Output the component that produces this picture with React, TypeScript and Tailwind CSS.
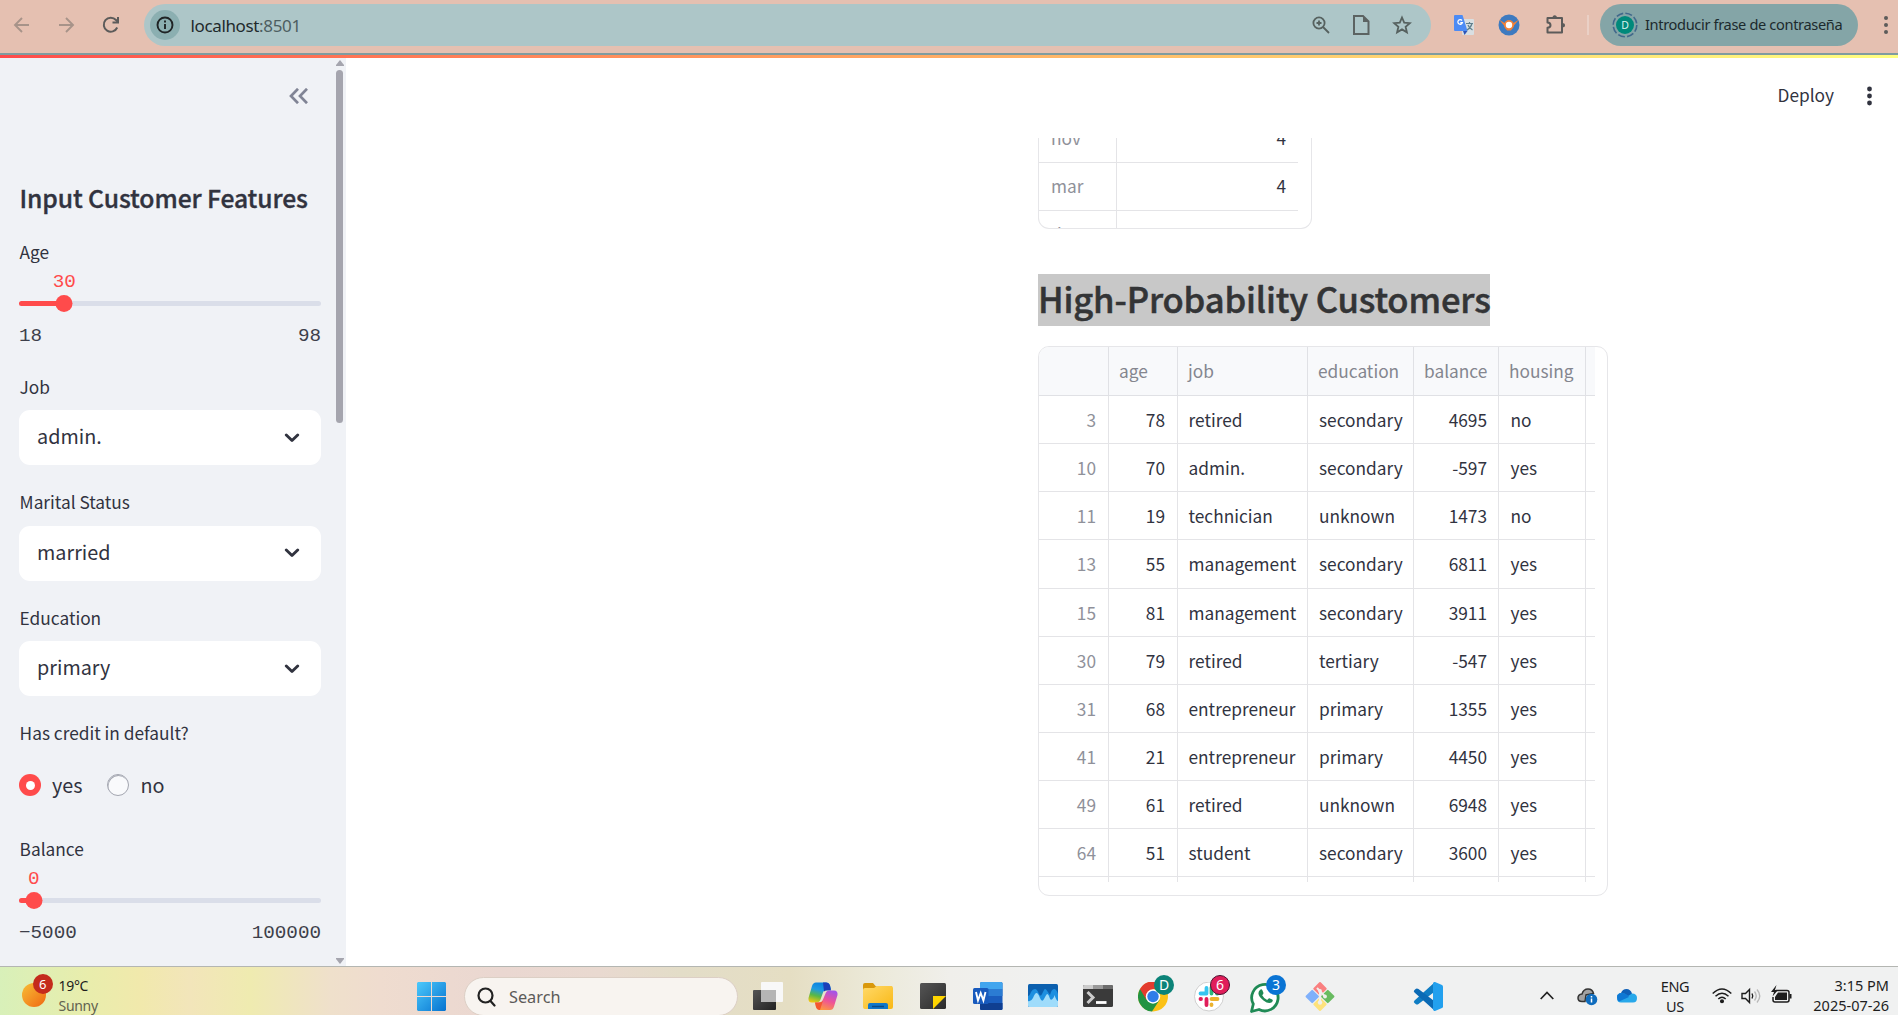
import React from "react";

const sans = "font-['Noto_Sans_CJK_SC',sans-serif]";
const ui = "font-['Noto_Sans',sans-serif]";
const mono = "font-['Liberation_Mono',monospace]";

/* ---------- Browser toolbar ---------- */

function Toolbar() {
  return (
    <div className={`flex h-[53px] items-start bg-[#e5c0b1] ${ui}`}>
      <div className="flex h-[49px] w-[144px] shrink-0 items-center pl-[13px]">
        <svg width="18" height="18" viewBox="0 0 18 18" fill="none" stroke="#a79389" strokeWidth="1.9"><path d="M16 9H2.5M9 2 2 9l7 7" /></svg>
        <svg className="ml-[27px]" width="18" height="18" viewBox="0 0 18 18" fill="none" stroke="#a79389" strokeWidth="1.9"><path d="M1 9h13.5M8 2l7 7-7 7" /></svg>
        <svg className="ml-[26px]" width="18" height="18" viewBox="0 0 18 18" fill="none" stroke="#5c5b5a" strokeWidth="2"><path d="M15.2 11.500A7 7 0 1 1 14 4l1.500 1.600" /><path d="M16 1v5.500h-5.500" /></svg>
      </div>
      <div className="mt-1 flex h-[42px] w-[1287px] shrink-0 items-center rounded-full bg-[#adc6c8] pl-1.5">
        <div className="flex size-[30px] items-center justify-center rounded-full bg-[#8bafb1]">
          <svg width="18" height="18" viewBox="0 0 18 18" fill="none" stroke="#1f2425" strokeWidth="1.9"><circle cx="9" cy="9" r="7.500" /><path d="M9 8v5M9 4.500v2" /></svg>
        </div>
        <span className="mt-px ml-[10.5px] w-[112px] whitespace-nowrap text-[17px] leading-[30px] tracking-[-0.36px] text-[#1f2a2c]">localhost<span className="text-[#4d5e61]">:8501</span></span>
        <div className="ml-auto flex items-center gap-[22px] pr-[19px]">
          <svg width="18" height="18" viewBox="0 0 18 18" fill="none" stroke="#56615f" strokeWidth="1.8"><circle cx="7" cy="7" r="5.600" /><path d="m11 11 6 6M7 4.500v5M4.500 7h5" /></svg>
          <svg width="18" height="22" viewBox="0 0 18 22" fill="none" stroke="#5c6362" strokeWidth="2"><path d="M2 2h9l5.500 5.500V20H2z" /><path d="M11 2v6h6z" fill="#5c6362" stroke="none" /></svg>
          <svg width="20" height="20" viewBox="0 0 20 20" fill="none" stroke="#56615f" strokeWidth="1.8"><path d="m10 2.500 2.200 5.100 5.600.5-4.200 3.700 1.300 5.500L10 14.400l-4.900 2.900 1.300-5.500L2.200 8.100l5.600-.5z" /></svg>
        </div>
      </div>
      <div className="flex h-[50px] items-center">
        <svg className="ml-[22px]" width="22" height="22" viewBox="0 0 22 22">
          <rect x="9" y="5" width="12" height="16" rx="1" fill="#d9dfe2" />
          <path d="M1 2q0-1 1-1h7.500L14.500 17H2q-1 0-1-1z" fill="#4c8bf5" />
          <path d="M14.500 17H10l1.500 4z" fill="#2f55b8" />
          <path d="M13 9.500h7M16.500 8v1.500M19 9.500q-1 4-5 6.500M15 11q1 3 4.500 5" stroke="#5f7f8c" strokeWidth="1.200" fill="none" />
          <path d="M9 6.500A2.300 2.300 0 1 0 9.400 8.600H7.300" stroke="#fff" strokeWidth="1.300" fill="none" />
        </svg>
        <svg className="ml-[23px]" width="22" height="22" viewBox="0 0 22 22">
          <circle cx="11" cy="11" r="10.500" fill="#3d7ac0" />
          <path d="M1 5.500 6.500 9h9L21 5.500 16 11.500 13 16.500H9L6 11.500z" fill="#f28238" />
          <circle cx="11" cy="11" r="5" fill="#f28238" /><circle cx="11" cy="11" r="3.200" fill="#fff" />
        </svg>
        <svg className="ml-[24px]" width="23" height="22" viewBox="0 0 23 22" fill="none" stroke="#5c5b5a" strokeWidth="2" strokeLinejoin="round"><path d="M3.500 4h14.500v14.500H3.500v-4.700q3-.3 3-2.600t-3-2.600z" /><path d="M8.500 4q0-2.800 2.200-2.800T13 4zM18 9q3 0 3 2.200T18 13.500z" fill="#5c5b5a" stroke="none" /></svg>
        <div className="ml-[20px] h-5 w-[2px] bg-[#ead0c6]" />
        <div className="ml-[11px] flex h-[42px] w-[258px] shrink-0 items-center rounded-full bg-[#84a5a7] pl-3">
          <svg className="shrink-0" width="26" height="26" viewBox="0 0 26 26"><circle cx="13" cy="13" r="11.800" fill="none" stroke="#41688b" strokeWidth="1.600" strokeDasharray="7 2.270" /><circle cx="13" cy="13" r="9" fill="#00897b" /><text x="13" y="16.700" textAnchor="middle" fontSize="10.500" fill="#d9f2ee" fontFamily="Noto Sans">D</text></svg>
          <span className="ml-[7px] whitespace-nowrap text-[14.600px] tracking-[-0.35px] text-[#1c2a2d]">Introducir frase de contraseña</span>
        </div>
        <svg className="ml-[25px] shrink-0" width="6" height="20" viewBox="0 0 6 20" fill="#5c5b5a"><circle cx="3" cy="3" r="2" /><circle cx="3" cy="10" r="2" /><circle cx="3" cy="17" r="2" /></svg>
      </div>
    </div>
  );
}

/* ---------- Sidebar ---------- */

const labelCls = "pl-[0.6px] text-[17.3px] leading-[24.6px] h-6 text-[#31333f]";

function Slider(p: { label: string; value: string; pct: number; min: string; max: string }) {
  return (
    <>
      <div className={labelCls}>{p.label}</div>
      <div className={`relative mt-[6px] h-6 text-[19.25px] leading-6 text-[#ff4b4b] ${mono}`}>
        <span className="absolute -translate-x-1/2" style={{ left: `${p.pct}%` }}>{p.value}</span>
      </div>
      <div className="relative mt-[7px] h-[5px] rounded-full bg-[#dadee9]">
        <div className="h-full rounded-full bg-[#ff4b4b]" style={{ width: `${p.pct}%` }} />
        <div className="absolute -top-[6px] size-[17px] -translate-x-1/2 rounded-full bg-[#ff4b4b]" style={{ left: `${p.pct}%` }} />
      </div>
      <div className={`mt-[18px] flex justify-between text-[19.25px] leading-6 text-[#3d3f4a] ${mono}`}>
        <span>{p.min}</span><span>{p.max}</span>
      </div>
    </>
  );
}

function Select({ label, value }: { label: string; value: string }) {
  return (
    <div className="h-[115.5px]">
      <div className={labelCls}>{label}</div>
      <div className="mt-[11.5px] flex h-[55px] items-center justify-between rounded-[11px] bg-white pr-[21px] pl-[18px]">
        <span className="-mt-[3px] text-[19.8px] leading-[30px]">{value}</span>
        <svg width="16" height="10" viewBox="0 0 16 10" fill="none" stroke="#31333f" strokeWidth="2.900" strokeLinecap="round" strokeLinejoin="round"><path d="m2.300 2 5.700 5.500L13.700 2" /></svg>
      </div>
    </div>
  );
}

function Sidebar() {
  return (
    <aside className={`flex w-[346px] shrink-0 overflow-hidden bg-[#f0f2f6] text-[#31333f] ${sans}`}>
      <div className="w-[321px] pl-[19px]">
        <div className="flex h-[121px] justify-end pt-[30px] pr-[12px]">
          <svg width="20" height="16" viewBox="0 0 20 16" fill="none" stroke="#808495" strokeWidth="2.700"><path d="M9 .8 2 8l7 7.200M18 .8 11 8l7 7.200" /></svg>
        </div>
        <h2 className="h-[61px] pl-[0.5px] whitespace-nowrap text-[24.700px] leading-[36px] font-medium tracking-[-0.1px] [-webkit-text-stroke:0.35px_#31333f]">Input Customer Features</h2>
        <div className="h-[134.5px]"><Slider label="Age" value="30" pct={15} min="18" max="98" /></div>
        <Select label="Job" value="admin." />
        <Select label="Marital Status" value="married" />
        <Select label="Education" value="primary" />
        <div className="h-[115.5px]">
          <div className={labelCls}>Has credit in default?</div>
          <div className="mt-[25px] flex h-[30px] items-center text-[19.8px] leading-[30px]">
            <span className="flex size-[22px] items-center justify-center rounded-full bg-[#ff4b4b]"><span className="size-[9px] rounded-full bg-white" /></span>
            <span className="ml-[11px]">yes</span>
            <span className="ml-[25px] size-[22px] rounded-full border border-[#a3a6b0] bg-[#f9fafc] shadow-[inset_0.5px_1px_0_#a3a6b0]" />
            <span className="ml-[11px]">no</span>
          </div>
        </div>
        <Slider label="Balance" value="0" pct={4.9} min="−5000" max="100000" />
      </div>
      <div className="flex w-[25px] flex-col items-center pt-[2px] pl-[12px]">
        <svg className="shrink-0" width="8" height="6" viewBox="0 0 8 6"><path d="M4 0 8 5v1H0V5z" fill="#a5a5ae" /></svg>
        <div className="mt-[4px] h-[353px] w-[7px] shrink-0 rounded-full bg-[#a5a5ae]" />
        <svg className="mt-auto mb-[2px] shrink-0" width="8" height="6" viewBox="0 0 8 6"><path d="M4 6 8 1V0H0v1z" fill="#a5a5ae" /></svg>
      </div>
    </aside>
  );
}

/* ---------- Main content ---------- */

const rows: string[][] = [
  ["3", "78", "retired", "secondary", "4695", "no"],
  ["10", "70", "admin.", "secondary", "-597", "yes"],
  ["11", "19", "technician", "unknown", "1473", "no"],
  ["13", "55", "management", "secondary", "6811", "yes"],
  ["15", "81", "management", "secondary", "3911", "yes"],
  ["30", "79", "retired", "tertiary", "-547", "yes"],
  ["31", "68", "entrepreneur", "primary", "1355", "yes"],
  ["41", "21", "entrepreneur", "primary", "4450", "yes"],
  ["49", "61", "retired", "unknown", "6948", "yes"],
  ["64", "51", "student", "secondary", "3600", "yes"],
];
const heads = ["", "age", "job", "education", "balance", "housing"];
const grid = "grid w-[556px] grid-cols-[70px_69px_130px_106px_85px_87px_9px]";
const align = ["text-right pr-[12px] text-[#8f919a]", "text-right pr-[12px]", "pl-[10.5px]", "pl-[11px]", "text-right pr-[11px]", "pl-[11.5px]"];

function MonthRow({ name, count }: { name: string; count?: number }) {
  return (
    <div className="grid h-[48px] w-[259px] grid-cols-[78px_181px] border-b border-[#e4e4e7] leading-[45px]">
      <span className="border-r border-[#e4e4e7] pl-[12px] text-[#8f919a]">{name}</span>
      <span className="pr-[12px] text-right">{count}</span>
    </div>
  );
}

function Main() {
  return (
    <main className={`flex-1 overflow-hidden bg-white text-[#31333f] ${sans}`}>
      <div className="flex h-[80px] items-start justify-end pt-[24px] pr-[25px]">
        <span className="text-[17.3px] leading-[26px]">Deploy</span>
        <svg className="mt-[4px] ml-[32px]" width="7" height="20" viewBox="0 0 7 20" fill="#31333f"><circle cx="3.500" cy="3" r="2.400" /><circle cx="3.500" cy="10" r="2.400" /><circle cx="3.500" cy="17" r="2.400" /></svg>
      </div>
      <div className="ml-[692px] text-[17.3px]">
        <div className="flex h-[91px] w-[274px] flex-col justify-start overflow-hidden rounded-b-[11px] border border-t-0 border-[#e6e6e9]">
          <div className="-mt-[23px]"><MonthRow name="nov" count={4} /><MonthRow name="mar" count={4} /><MonthRow name="dec" /></div>
        </div>
        <h3 className="mt-[45px] h-[52px] w-[452px] bg-[#c8c8c8] text-[34.600px] leading-[48px] font-medium tracking-[-0.15px] whitespace-nowrap text-[#333436] [-webkit-text-stroke:0.5px_#333436]">High-Probability Customers</h3>
        <div className="mt-[20px] h-[550px] w-[570px] overflow-hidden rounded-[11px] border border-[#e6e6e9]">
          <div className={`${grid} h-[49px] border-b border-[#e0e1e5] bg-[#f8f9fb] leading-[48px] text-[#84868f]`}>
            {heads.map((h) => <span key={h} className="border-r border-[#e0e1e5] pl-[10px]">{h}</span>)}
          </div>
          <div className="h-[486px] overflow-hidden">
            {rows.map((r) => (
              <div key={r[0]} className={`${grid} h-[48.15px] border-b border-[#e4e4e7] leading-[48px]`}>
                {r.map((c, i) => <span key={i} className={`border-r border-[#e4e4e7] ${align[i]}`}>{c}</span>)}
              </div>
            ))}
            <div className={`${grid} h-[48px]`}>
              {heads.map((h) => <span key={h} className="border-r border-[#e4e4e7]" />)}
            </div>
          </div>
        </div>
      </div>
    </main>
  );
}

/* ---------- Taskbar ---------- */

function Badge({ text, color }: { text: string; color: string }) {
  return <span className={`absolute -top-[7px] -right-[6px] flex size-[20px] items-center justify-center rounded-full text-[14px] leading-none text-white ${color}`}>{text}</span>;
}

function Apps() {
  return (
    <div className="flex items-start gap-[25px] pt-[15px]">
      <svg width="30" height="30" viewBox="0 0 30 30"><defs><linearGradient id="tv" x2="1" y2="1"><stop stopColor="#555" /><stop offset="1" stopColor="#222" /></linearGradient></defs><rect y="8" width="23" height="20" rx="1" fill="url(#tv)" /><rect x="8" y="0" width="22" height="20" rx="1" fill="#f8f8f8" /><path d="M8 8h15v12H9q-1 0-1-1z" fill="#b5b5b5" /></svg>
      <svg width="30" height="30" viewBox="0 0 30 30">
        <defs><linearGradient id="ca" x1=".5" x2=".2" y2="1"><stop stopColor="#0a82e0" /><stop offset=".35" stopColor="#1f9ae0" /><stop offset=".65" stopColor="#58b847" /><stop offset="1" stopColor="#f7c80f" /></linearGradient><linearGradient id="cb" x1=".7" x2=".3" y2="1"><stop stopColor="#a453e8" /><stop offset=".5" stopColor="#ee5397" /><stop offset="1" stopColor="#ff9a3d" /></linearGradient></defs>
        <path d="M8 .5h10q3 0 4 3l1 4h-4q-3 0-4 3l-2.500 7q-1 3-4 3H4Q0 20.500.5 16L4 4Q5 .5 8 .5z" fill="url(#ca)" />
        <path d="M15 .5h3q3 0 4 3l1 5h-4q-2 0-3 1z" fill="#1b3fb8" />
        <path d="M22 28H12q-3 0-4-3l-1-4.500h4q3 0 4-3l2.500-6q1-3 4-3H26q4 0 3.500 4.500L26 24.500q-1 3.500-4 3.500z" fill="url(#cb)" />
        <path d="M7 20.500h4q3 0 4-2l-3 9.500q-3 0-4-3z" fill="#f4572e" />
      </svg>
      <svg width="30" height="29" viewBox="0 0 30 29"><defs><linearGradient id="fo" x2="1" y2="1"><stop stopColor="#ffd968" /><stop offset="1" stopColor="#f9b815" /></linearGradient></defs><path d="M0 3q0-2 2-2h8l3 3.500H29V10H0z" fill="#d9980b" /><path d="M0 8q0-2 2-2h9l3-2h14q2 0 2 2v19q0 2-2 2H2q-2 0-2-2z" fill="url(#fo)" /><path d="M5 27v-4q0-2 2-2h16q2 0 2 2v4z" fill="#1177c9" /><path d="M9 24.500h12" stroke="#0a4a86" strokeWidth="1.500" /></svg>
      <svg width="30" height="29" viewBox="0 0 30 29"><defs><linearGradient id="sn" x2="1" y2="1"><stop stopColor="#555" /><stop offset="1" stopColor="#2b2b2b" /></linearGradient></defs><rect x="2" y="1" width="26" height="26" rx="1.500" fill="url(#sn)" /><path d="M15 14h13L15 27z" fill="#ffd500" /></svg>
      <svg width="30" height="29" viewBox="0 0 30 29"><rect x="7" width="22.500" height="28" rx="1.500" fill="#1a5dbe" /><path d="M7 7V1.500Q7 0 8.500 0H28q1.500 0 1.500 1.500V7z" fill="#41a5ee" /><path d="M7 7h22.500v7H7z" fill="#2b7cd3" /><path d="M7 21h22.500v5.500q0 1.500-1.500 1.500H8.500Q7 28 7 26.500z" fill="#103f91" /><rect y="6" width="15.500" height="16" rx="1.500" fill="#185abd" /><path d="m3 10 2 8.500L7.700 11l2.700 7.500L12.500 10" fill="none" stroke="#fff" strokeWidth="1.900" /></svg>
      <svg width="30" height="29" viewBox="0 0 30 29"><rect y="2" width="30" height="23" rx="1.500" fill="#0b5fae" /><path d="M0 14q1.500 0 3-4 1.500-3 4-3 2 0 4 5 1.500 3 3 0l2-4q1-2 2.500 0l3.500 5q1.500-6 4-6t4 5v11H0z" fill="#1d8fe0" /><path d="M0 19q3 1 5-3 2-5 3.500-5T12 16q2 5 4 1t3-5q1.500 0 2.500 3.500t3 1.500 2-4q2 6 3.500 6v4.500q0 1.500-1.500 1.500h-27Q0 25 0 23.500z" fill="#9fdcfb" /></svg>
      <svg width="30" height="29" viewBox="0 0 30 29"><rect y="3" width="30" height="22" rx="1.500" fill="#3a3a3a" /><path d="M0 7V4.500Q0 3 1.500 3H10v4z" fill="#ccc" /><path d="M10 3h10v4H10z" fill="#9a9a9a" /><path d="M20 3h8.500Q30 3 30 4.500V7H20z" fill="#6d6d6d" /><path d="m4.500 10 5.500 5.500L4.500 21" fill="none" stroke="#ccc" strokeWidth="3" /><path d="M13 20.500h10.500" stroke="#fff" strokeWidth="2.800" /></svg>
      <span className="relative size-[30px]">
        <svg width="30" height="30" viewBox="0 0 30 30"><circle cx="15" cy="14.500" r="15" fill="#fbc116" /><path d="M2 7a15 15 0 0 0 12 22.500L21.500 18 15 14.500z" fill="#229342" /><path d="M2 7A15 15 0 0 1 28 7H15L8.500 18z" fill="#e33b2e" /><circle cx="15" cy="14.500" r="7.200" fill="#fff" /><circle cx="15" cy="14.500" r="5.700" fill="#2f7de9" /></svg>
        <Badge text="D" color="bg-[#0b8378]" />
      </span>
      <span className="relative ml-px size-[30px]">
        <svg width="30" height="30" viewBox="0 0 30 30" strokeLinecap="round" strokeWidth="3.800" fill="none"><circle cx="15" cy="14.500" r="14.500" fill="#fff" stroke="#cfcfcf" strokeWidth="1" /><path d="M12.500 6v5.500M6.500 11.500h6" stroke="#36c5f0" /><path d="M17.500 5.500v6M23 11.500h.5" stroke="#2eb67d" /><path d="M17.500 17h6M17.500 22.500V23" stroke="#ecb22e" /><path d="M12.500 17v6M6.500 17H7" stroke="#e01e5a" /></svg>
        <Badge text="6" color="bg-[#e01e5a] border-[1.5px] border-[#4b1230]" />
      </span>
      <span className="relative ml-px size-[30px]">
        <svg width="30" height="31" viewBox="0 0 30 31"><path d="M1.500 29.500 3.300 22A13.200 13.200 0 1 1 9 27.500z" fill="#fff" stroke="#1f8a55" strokeWidth="2.800" strokeLinejoin="round" /><path d="M10 8q1.500-1.500 2.500.5l1 2.500q0 1-1.300 2.200 1.800 3.500 5 4.800 1.300-2 2.300-1.800l2.700 1.300q1.300 1-.2 2.500-3 2.700-8.500-1.500t-5-7.500Q8.600 9 10 8z" fill="#1f8a55" /></svg>
        <Badge text="3" color="bg-[#0a74d4]" />
      </span>
      <svg width="30" height="30" viewBox="0 0 30 30"><g transform="translate(15 14.500) rotate(45)"><rect x="-10.500" y="-10.500" width="10" height="10" rx="1" fill="#f98080" /><rect x=".5" y="-10.500" width="10" height="10" rx="1" fill="#68bb60" /><rect x="-10.500" y=".5" width="10" height="10" rx="1" fill="#7fb0fb" /><rect x=".5" y=".5" width="10" height="10" rx="1" fill="#fde27c" /></g><path d="M12 6l8 8.500M15 8v14" stroke="#efefee" strokeWidth="2" /><circle cx="15" cy="9" r="1.900" fill="#efefee" /><circle cx="20" cy="14.500" r="1.900" fill="#efefee" /><circle cx="15" cy="20.500" r="2.200" fill="#efefee" /></svg>
      <svg className="ml-[53px]" width="30" height="30" viewBox="0 0 30 30"><path d="M22 0 1.500 18.500q-1.500 1.500 0 2.500l1.500 1.200q1 .8 2.500-.2L22.500 9z" fill="#0f7dc4" /><path d="M22 29 1.500 10.500Q0 9 1.500 8L3 6.800q1-.8 2.500.2L22.500 20z" fill="#0a6ab5" /><path d="m22 0 7 3q1 .6 1 1.500v20q0 1-1 1.500l-7 3q-1.500 0-2-1.500V1Q20.500 0 22 0z" fill="#22a0ee" /></svg>
    </div>
  );
}

function Taskbar() {
  return (
    <footer className={`flex h-[49px] overflow-hidden border-t border-[#b4b6b2] bg-[linear-gradient(90deg,#d8f0b9_0px,#e9edac_90px,#f1e9ac_140px,#f2e5ba_190px,#efebb0_250px,#efe0cb_330px,#efdccf_380px,#ead7d1_500px,#e9d9d0_600px,#e3ddc8_680px,#e5dec3_790px,#eceada_880px,#f0efeb_950px,#f0f1f1_1060px)] text-[#1d1d1d] ${ui}`}>
      <div className="relative w-[417px] shrink-0 pt-[9px] pl-[58.5px] text-[14px] leading-[20px] tracking-[-0.3px]">
        <div className="absolute top-[16px] left-[22px] size-[24px] rounded-full bg-linear-to-br from-[#f6bd35] to-[#ee6510]" />
        <span className="absolute top-[6.5px] left-[32.5px] flex size-5 items-center justify-center rounded-full bg-[#c42b1c] text-[13px] text-white">6</span>
        <div>19°C</div>
        <div className="text-[#62624f]">Sunny</div>
      </div>
      <svg className="mt-[15px] shrink-0" width="29" height="29" viewBox="0 0 29 29"><defs><linearGradient id="wi" x2="1" y2="1"><stop stopColor="#4cc9fb" /><stop offset="1" stopColor="#0672d0" /></linearGradient></defs><path d="M1 0h13v14H0V1zM15 0h13l1 1v13H15zM0 15h14v14H1l-1-1zM15 15h14v13l-1 1H15z" fill="url(#wi)" /></svg>
      <div className="mt-[10px] ml-[18px] flex h-[39px] w-[274px] shrink-0 items-center rounded-full border border-[#dccfc5] bg-[#f8f4f0] pl-[12px]">
        <svg width="19" height="20" viewBox="0 0 19 20" fill="none" stroke="#222" strokeWidth="2.200" strokeLinecap="round"><circle cx="8.500" cy="8.500" r="7" /><path d="m13.500 14 4 4.500" /></svg>
        <span className="mt-px ml-[13px] text-[16.300px] text-[#5c5a58]">Search</span>
      </div>
      <div className="ml-[15px]"><Apps /></div>
      <div className="ml-auto flex shrink-0 items-start pr-[9px] text-[14.500px] leading-[20px]">
        <svg className="mt-[24px]" width="14" height="9" viewBox="0 0 14 9" fill="none" stroke="#222" strokeWidth="1.700"><path d="m.7 8 6.300-6.500L13.300 8" /></svg>
        <svg className="mt-[21px] ml-[23px]" width="21" height="18" viewBox="0 0 21 18"><path d="M8 13.500H5q-4 0-4-3.500t4-4q1.500-5 6-5t5.500 4.500L9 7z" fill="#a2a2a2" stroke="#333" strokeWidth="1.500" /><circle cx="14.500" cy="11.500" r="5.800" fill="#0f6cbd" /><path d="M14.500 10.500v4M14.500 8v1.500" stroke="#fff" strokeWidth="1.500" /></svg>
        <svg className="mt-[22px] ml-[19px]" width="20" height="14" viewBox="0 0 20 14"><path d="M4 10Q0 10 0 7.500 0 4.500 4 4 5.500 0 9.500 0T15 4.500l-3 5z" fill="#0f60b8" /><path d="M4 13.500Q0 13.500 0 9t4-5q4 0 7 3l4-2.500q5 0 5 4.500t-4 4.500z" fill="#28a8ea" /><path d="M0 8q1-4 5-4t7 4L2 12.500Q0 11 0 8z" fill="#0f78d4" /></svg>
        <div className="mt-[9px] ml-[23px] w-[30px] text-center tracking-[-0.3px]">ENG<br />US</div>
        <svg className="mt-[21px] ml-[22px]" width="20" height="16" viewBox="0 0 20 16" fill="none" stroke="#1d1d1d" strokeWidth="1.500"><path d="M.7 5.500q9.300-9 18.600 0M3.500 8.300q6.500-6 13 0M6.300 11q3.700-3.500 7.400 0" /><circle cx="10" cy="13.300" r="1.300" fill="#1d1d1d" /></svg>
        <svg className="mt-[20px] ml-[9px]" width="21" height="18" viewBox="0 0 21 18" fill="none" stroke="#1d1d1d" strokeWidth="1.400"><path d="M1 6.500h3.500l4-4v13l-4-4H1z" /><path d="M11 6.500q1.500 2.500 0 5" /><path d="M13.500 4.500q3.500 4.500 0 9M16 2.500q5.500 6.500 0 13" stroke="#b9b9b9" /></svg>
        <svg className="mt-[18px] ml-[9px]" width="21" height="19" viewBox="0 0 21 19"><path d="M5 5.500h11q2 0 2 2V15q0 2-2 2H4q-2 0-2-2v-3" fill="none" stroke="#1d1d1d" strokeWidth="1.500" /><path d="M7 7.500h9V15H4v-3z" fill="#1d1d1d" /><path d="M18.500 9h2v4.500h-2z" fill="#1d1d1d" /><path d="M5.500 0 0 7h3L1.500 11.500 7 5H4z" fill="#1d1d1d" /></svg>
        <div className="mt-[8px] ml-[19px] w-[78px] text-right whitespace-nowrap">3:15 PM<br />2025-07-26</div>
      </div>
    </footer>
  );
}

export default function App() {
  return (
    <div className="flex h-[1015px] w-[1898px] flex-col overflow-hidden bg-white">
      <Toolbar />
      <div className="h-[2px] shrink-0 bg-[#7f9ca0]" />
      <div className="h-[3px] shrink-0 bg-linear-to-r from-[#ff4b4b] to-[#ffff80]" />
      <div className="flex h-[908px] shrink-0"><Sidebar /><Main /></div>
      <Taskbar />
    </div>
  );
}
